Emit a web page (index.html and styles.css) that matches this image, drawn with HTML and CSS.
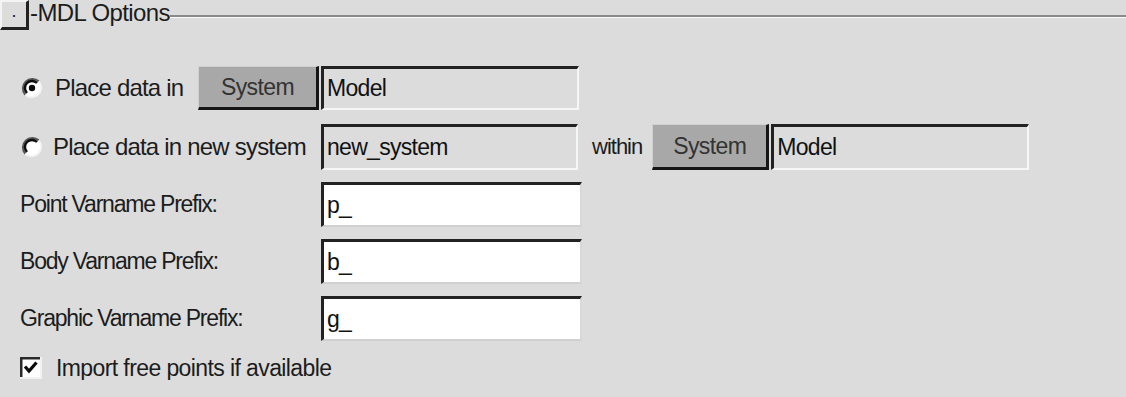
FILE: index.html
```html
<!DOCTYPE html>
<html lang="en">
<head>
    <meta charset="UTF-8">
    <title>MDL Options</title>
    <link rel="stylesheet" href="styles.css">
</head>
<body>

    <div class="header">
        <span class="toggle">.</span>
        <span class="title">-MDL Options</span>
        <span class="rule"></span>
    </div>

    <div class="panel">
        <div class="row row-first">
            <span class="opt opt-short">
                <svg class="radio" width="22" height="22" viewBox="0 0 22 22">
                    <circle cx="11" cy="11" r="9.5" fill="#fff"/>
                    <path d="M4.3 17.7 A9.5 9.5 0 0 1 17.7 4.3" fill="none" stroke="#555" stroke-width="2.2"/>
                    <path d="M6 16 A7 7 0 0 1 16 6" fill="none" stroke="#0c0c0c" stroke-width="2.4"/>
                    <path d="M17.7 4.3 A9.5 9.5 0 0 1 4.3 17.7" fill="none" stroke="#f4f4f4" stroke-width="2"/>
                    <circle cx="11" cy="11" r="3.2" fill="#0c0c0c"/>
                </svg>
                Place data in
            </span>
            <span class="btn btn-a">System</span>
            <span class="field field-off field-a">Model</span>
        </div>

        <div class="row row-second">
            <span class="opt opt-long">
                <svg class="radio" width="22" height="22" viewBox="0 0 22 22">
                    <circle cx="11" cy="11" r="9.5" fill="#fff"/>
                    <path d="M4.3 17.7 A9.5 9.5 0 0 1 17.7 4.3" fill="none" stroke="#555" stroke-width="2.2"/>
                    <path d="M6 16 A7 7 0 0 1 16 6" fill="none" stroke="#0c0c0c" stroke-width="2.4"/>
                    <path d="M17.7 4.3 A9.5 9.5 0 0 1 4.3 17.7" fill="none" stroke="#f4f4f4" stroke-width="2"/>
                </svg>
                Place data in new system
            </span>
            <span class="field field-off field-b">new_system</span>
            <span class="within">within</span>
            <span class="btn btn-b">System</span>
            <span class="field field-off field-c">Model</span>
        </div>

        <div class="row row-prefix">
            <span class="label">Point Varname Prefix:</span>
            <span class="field field-on">p_</span>
        </div>
        <div class="row row-prefix">
            <span class="label">Body Varname Prefix:</span>
            <span class="field field-on">b_</span>
        </div>
        <div class="row row-prefix">
            <span class="label">Graphic Varname Prefix:</span>
            <span class="field field-on">g_</span>
        </div>

        <div class="row row-check">
            <svg class="check" width="22" height="22" viewBox="0 0 22 22">
                <rect x="0" y="0" width="22" height="22" fill="#f2f2f2"/>
                <rect x="0" y="0" width="20" height="20" fill="#2a2a2a"/>
                <rect x="2.5" y="2.5" width="17.5" height="17.5" fill="#fff"/>
                <path d="M5 9.5 L9 14 L16.5 5.5" fill="none" stroke="#0c0c0c" stroke-width="3.2"/>
            </svg>
            <span class="check-text">Import free points if available</span>
        </div>
    </div>

</body>
</html>
```

FILE: styles.css
```css
body {
    margin: 0;
    background: #dcdcdc;
    font-family: "Liberation Sans", Arial, sans-serif;
    color: #1c1c1c;
    font-size: 22px;
}
.header {
    display: flex;
    align-items: center;
    height: 32px;
}
.toggle {
    box-sizing: border-box;
    width: 29px;
    height: 30px;
    border-top: 2px solid #f4f4f4;
    border-left: 2px solid #f4f4f4;
    border-right: 3px solid #222;
    border-bottom: 3px solid #222;
    font-size: 18px;
    line-height: 18px;
    text-align: center;
    align-self: flex-start;
}
.title {
    font-size: 24px;
    padding-left: 1px;
    margin-top: -6px;
    letter-spacing: -0.6px;
}
.rule {
    flex: 1;
    height: 0;
    border-top: 2px solid #8a8a8a;
    border-bottom: 1px solid #fafafa;
    margin-top: 1px;
}
.panel {
    padding-left: 20px;
}
.row {
    display: flex;
    align-items: center;
}
.row-first {
    margin-top: 34px;
    height: 44px;
}
.row-second {
    margin-top: 14px;
    height: 46px;
}
.row-prefix {
    margin-top: 12px;
    height: 45px;
}
.row-check {
    margin-top: 15px;
    height: 24px;
}
.opt {
    display: flex;
    align-items: center;
    gap: 12px;
    font-size: 24px;
    letter-spacing: -0.8px;
    box-sizing: border-box;
    padding-left: 1px;
}
.opt-short {
    width: 178px;
}
.opt-long {
    width: 301px;
    gap: 10px;
}
.radio {
    flex: none;
}
.label {
    width: 301px;
    font-size: 23px;
    letter-spacing: -1.2px;
}
.btn {
    box-sizing: border-box;
    height: 100%;
    display: flex;
    align-items: center;
    justify-content: center;
    background: #a8a8a8;
    color: #333;
    border-top: 1px solid #d0d0d0;
    border-left: 1px solid #d0d0d0;
    border-right: 3px solid #151515;
    border-bottom: 3px solid #151515;
    font-size: 23px;
    letter-spacing: -0.6px;
}
.btn-a {
    width: 121px;
    margin-right: 2px;
}
.btn-b {
    width: 117px;
    margin-left: 10px;
    margin-right: 2px;
}
.field {
    box-sizing: border-box;
    height: 100%;
    display: flex;
    align-items: center;
    padding-left: 3px;
    border-top: 3px solid #222;
    border-left: 3px solid #222;
    border-right: 2px solid #f6f6f6;
    border-bottom: 2px solid #f6f6f6;
    font-size: 23px;
    letter-spacing: -0.7px;
    color: #111;
}
.field-off {
    background: #dcdcdc;
}
.field-on {
    background: #fff;
    width: 261px;
    border-right-color: #d8d8d8;
    border-bottom-color: #d0d0d0;
}
.field-a {
    width: 258px;
}
.field-b {
    width: 257px;
}
.field-c {
    width: 258px;
}
.within {
    margin-left: 14px;
    font-size: 22px;
    letter-spacing: -1px;
}
.check {
    flex: none;
}
.check-text {
    margin-left: 14px;
    font-size: 23px;
    letter-spacing: -0.6px;
}
```
